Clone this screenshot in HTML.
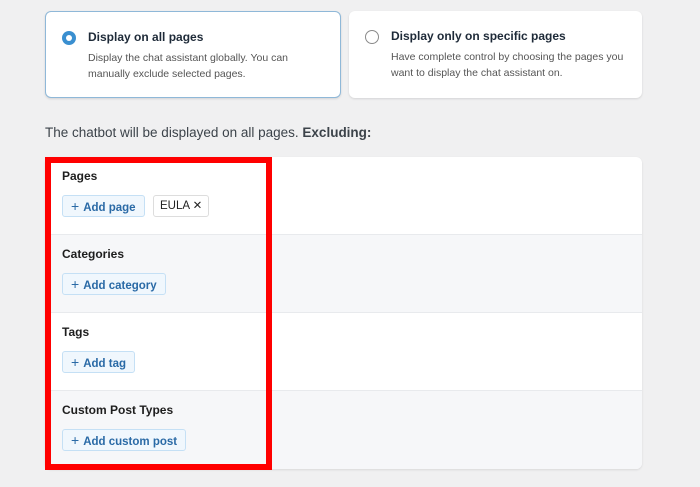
<!DOCTYPE html>
<html><head><style>
*{box-sizing:border-box;margin:0;padding:0}
body{width:700px;height:487px;background:#f0f0f1;font-family:"Liberation Sans",sans-serif;position:relative;overflow:hidden;color:#1e1e1e}
.card{position:absolute;top:11px;height:87px;background:#fff;border-radius:6px;box-shadow:0 1px 2px rgba(0,0,0,.12)}
.c1{left:45px;width:296px;border:1px solid #8fb8d8}
.c2{left:349px;width:293px}
.radio{position:absolute;left:16px;top:19px;width:14px;height:14px;border-radius:50%}
.c1 .radio{background:#3a8fd0;}
.c1 .radio:after{content:"";position:absolute;left:4px;top:4px;width:6px;height:6px;border-radius:50%;background:#fff}
.c2 .radio{border:1px solid #8a8a8a;left:16px;top:19px}
.ct{position:absolute;left:42px;top:18px;font-size:12px;font-weight:bold;color:#1e2a38}
.cd{position:absolute;left:42px;top:38px;font-size:10.5px;line-height:16px;color:#555;width:240px}
.lead{position:absolute;left:45px;top:125px;font-size:13.5px;color:#3c434a}
.panel{position:absolute;left:45px;top:157px;width:597px;height:312px;background:#fff;border-radius:6px;box-shadow:0 1px 2px rgba(0,0,0,.1);overflow:hidden}
.row{height:78px;border-bottom:1px solid #e8eaed;position:relative}
.row.g{background:#f6f7f9}
.rt{position:absolute;left:17px;top:12px;font-size:12px;font-weight:bold;color:#1e1e1e}
.btn{position:absolute;left:17px;top:38px;height:22px;border:1px solid #c5e0f5;background:#f0f7fd;border-radius:3px;color:#2a6aa6;font-size:11.5px;font-weight:bold;padding:0 8px;line-height:20px;white-space:nowrap}
.btn b{font-weight:normal;font-size:14px;margin-right:4px}
.tag{position:absolute;left:108px;top:38px;height:22px;border:1px solid #ddd;background:#fff;border-radius:3px;font-size:11.5px;padding:0 6px;line-height:20px;color:#222;white-space:nowrap}
.red{position:absolute;left:45px;top:157px;width:227px;height:313px;border:6px solid #ff0000}
</style></head><body>
<div class="card c1"><div class="radio"></div><div class="ct">Display on all pages</div><div class="cd">Display the chat assistant globally. You can manually exclude selected pages.</div></div>
<div class="card c2"><div class="radio"></div><div class="ct">Display only on specific pages</div><div class="cd">Have complete control by choosing the pages you want to display the chat assistant on.</div></div>
<div class="lead">The chatbot will be displayed on all pages. <b>Excluding:</b></div>
<div class="panel">
<div class="row"><div class="rt">Pages</div><div class="btn"><b>+</b>Add page</div><div class="tag">EULA ✕</div></div>
<div class="row g"><div class="rt">Categories</div><div class="btn"><b>+</b>Add category</div></div>
<div class="row"><div class="rt">Tags</div><div class="btn"><b>+</b>Add tag</div></div>
<div class="row g" style="border:0"><div class="rt">Custom Post Types</div><div class="btn"><b>+</b>Add custom post</div></div>
</div>
<div class="red"></div>
</body></html>
